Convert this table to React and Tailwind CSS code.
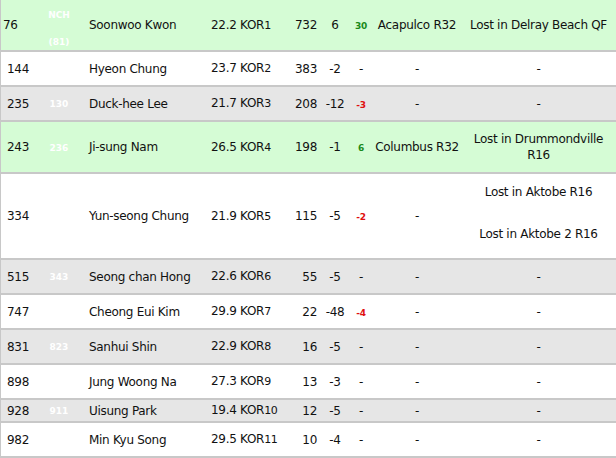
import React from 'react';

const rows = [
  { rank: '76', nch: ['NCH', '(81)'], name: 'Soonwoo Kwon', age: '22.2', kor: '1', pts: '732', chg: '6', move: '30', up: true, t1: 'Acapulco R32', t2: ['Lost in Delray Beach QF'], bg: 'bg-[#d5fcd5]', h: 'h-[52px]', first: true },
  { rank: '144', name: 'Hyeon Chung', age: '23.7', kor: '2', pts: '383', chg: '-2', move: '-', t1: '-', t2: ['-'], bg: 'bg-white', h: 'h-[35px]' },
  { rank: '235', nch: ['130'], name: 'Duck-hee Lee', age: '21.7', kor: '3', pts: '208', chg: '-12', move: '-3', t1: '-', t2: ['-'], bg: 'bg-[#e6e6e6]', h: 'h-[35px]' },
  { rank: '243', nch: ['236'], name: 'Ji-sung Nam', age: '26.5', kor: '4', pts: '198', chg: '-1', move: '6', up: true, t1: 'Columbus R32', t2: ['Lost in Drummondville', 'R16'], tight: true, bg: 'bg-[#d5fcd5]', h: 'h-[52px]' },
  { rank: '334', name: 'Yun-seong Chung', age: '21.9', kor: '5', pts: '115', chg: '-5', move: '-2', t1: '-', t2: ['Lost in Aktobe R16', 'Lost in Aktobe 2 R16'], spread: true, bg: 'bg-white', h: 'h-[86px]' },
  { rank: '515', nch: ['343'], name: 'Seong chan Hong', age: '22.6', kor: '6', pts: '55', chg: '-5', move: '-', t1: '-', t2: ['-'], bg: 'bg-[#e6e6e6]', h: 'h-[35px]' },
  { rank: '747', name: 'Cheong Eui Kim', age: '29.9', kor: '7', pts: '22', chg: '-48', move: '-4', t1: '-', t2: ['-'], bg: 'bg-white', h: 'h-[35px]' },
  { rank: '831', nch: ['823'], name: 'Sanhui Shin', age: '22.9', kor: '8', pts: '16', chg: '-5', move: '-', t1: '-', t2: ['-'], bg: 'bg-[#e6e6e6]', h: 'h-[35px]' },
  { rank: '898', name: 'Jung Woong Na', age: '27.3', kor: '9', pts: '13', chg: '-3', move: '-', t1: '-', t2: ['-'], bg: 'bg-white', h: 'h-[35px]' },
  { rank: '928', nch: ['911'], name: 'Uisung Park', age: '19.4', kor: '10', pts: '12', chg: '-5', move: '-', t1: '-', t2: ['-'], bg: 'bg-[#e6e6e6]', h: 'h-[23px]' },
  { rank: '982', name: 'Min Kyu Song', age: '29.5', kor: '11', pts: '10', chg: '-4', move: '-', t1: '-', t2: ['-'], bg: 'bg-white', h: 'h-[35px]' },
];

const Move = ({ value, up }) => {
  if (value === '-') return <span>-</span>;
  return (
    <span className={`text-[9px] font-bold ${up ? 'text-[#1a8a1a]' : 'text-[#e01010]'}`}>{value}</span>
  );
};

export default function App() {
  return (
    <div
      className="w-[616px] h-[458px] overflow-hidden bg-white text-[12px] text-[#111] tracking-[-0.3px] border-l border-[#c8c8c8]"
      style={{ fontFamily: '"DejaVu Sans", Verdana, sans-serif' }}
    >
      {rows.map((r) => (
        <div
          key={r.rank}
          className={`grid grid-cols-[40px_36px_130px_80px_34px_28px_24px_88px_1fr] items-center border-b-2 border-[#c8c8c8] ${r.bg} ${r.h}`}
        >
          <div className={r.first ? 'pl-[2px]' : 'pl-[6px]'}>{r.rank}</div>

          {/* ranking history, white on the row colour */}
          <div className={`flex flex-col items-center justify-center gap-[14px] text-[9px] font-bold text-white tracking-normal ${r.first ? 'pt-[8px]' : 'pt-[3px]'}`}>
            {r.nch && r.nch.map((t) => <span key={t}>{t}</span>)}
          </div>

          <div className="pl-[12px] whitespace-nowrap">{r.name}</div>

          <div className="pl-[4px] whitespace-nowrap">
            {r.age} KOR<span className="text-[11px]">{r.kor}</span>
          </div>

          <div className="text-right pr-[4px]">{r.pts}</div>
          <div className="text-center">{r.chg}</div>
          <div className="text-center">
            <Move value={r.move} up={r.up} />
          </div>
          <div className="text-center whitespace-nowrap">{r.t1}</div>
          <div className={`flex flex-col items-center text-center ${r.spread ? 'gap-[26px] pb-[6px]' : 'gap-0'}`}>
            {r.t2.map((t) => (
              <span key={t} className="whitespace-nowrap leading-[16px]">{t}</span>
            ))}
          </div>
        </div>
      ))}
    </div>
  );
}
